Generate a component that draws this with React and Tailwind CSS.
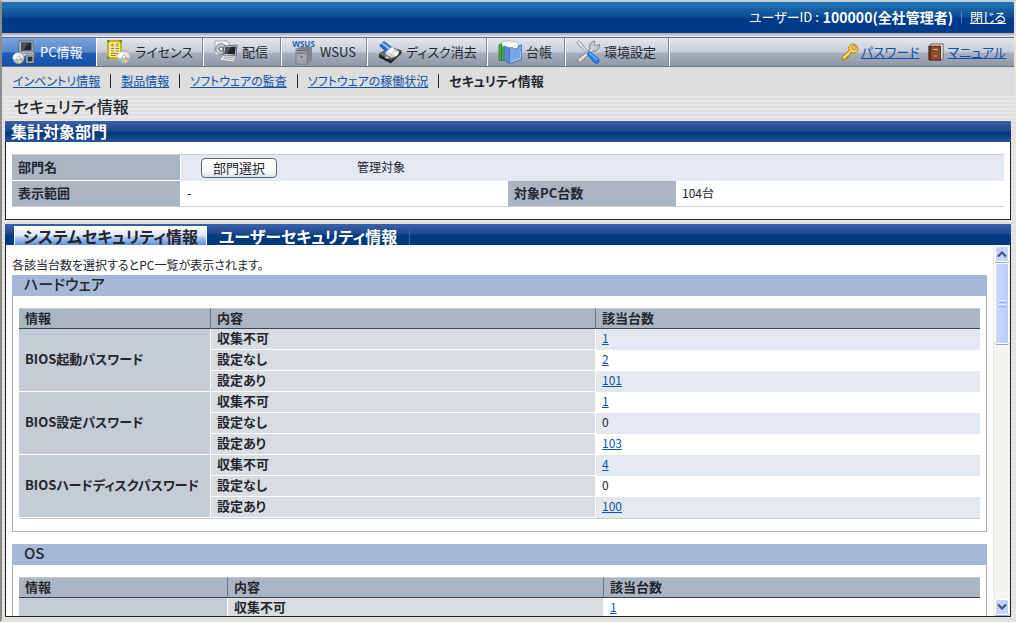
import React, { useRef, useState } from 'react';

const Disc = ({ cx, cy, r }) => (
  <g>
    <circle cx={cx} cy={cy} r={r} fill="#e4e6ea" stroke="#8f959e" strokeWidth="0.8" />
    <path d={`M${cx} ${cy} L${cx - r} ${cy + 1} A${r} ${r} 0 0 1 ${cx - 2} ${cy - r + 0.6} Z`} fill="#ffffff" />
    <path d={`M${cx} ${cy} L${cx + 1} ${cy + r - 0.5} A${r} ${r} 0 0 1 ${cx - 4} ${cy + r - 2} Z`} fill="#7fd6a8" />
    <path d={`M${cx} ${cy} L${cx + 4} ${cy + r - 2} A${r} ${r} 0 0 1 ${cx} ${cy + r - 0.5} Z`} fill="#f2d45c" />
    <path d={`M${cx} ${cy} L${cx + r - 0.6} ${cy + 1} A${r} ${r} 0 0 1 ${cx + 3} ${cy + r - 1.6} Z`} fill="#ee8fb4" />
    <path d={`M${cx} ${cy} L${cx - 4} ${cy + r - 2} L${cx - r + 0.6} ${cy + 2} Z`} fill="#8fb2f0" />
    <circle cx={cx} cy={cy} r="1.6" fill="#ffffff" stroke="#9aa0a8" strokeWidth="0.7" />
  </g>
);

const PcIcon = () => (
  <svg className="w-6 h-6 shrink-0" viewBox="0 0 24 24">
    <path d="M7 1 H21 V12 H7 Z" fill="#b9bec6" stroke="#5a616c" strokeWidth="0.8" />
    <path d="M9 2.5 H19.5 V10.5 H9 Z" fill="#23272e" />
    <path d="M9 2.5 H17 L11 10.5 H9 Z" fill="#4a515c" />
    <path d="M7 12 H21 L23 16 H6 Z" fill="#e3e5e9" stroke="#7b828d" strokeWidth="0.8" />
    <path d="M8.5 13.5 H20.5" stroke="#8c939e" strokeWidth="1" />
    <path d="M14 15 H22 V23 H14 Z" fill="#c3c7ce" stroke="#4d545f" strokeWidth="0.8" />
    <path d="M15.5 16.5 H20.5 V21.5 H15.5 Z" fill="#2b3038" />
    <Disc cx={6.5} cy={18} r={5.6} />
  </svg>
);

const LicenseIcon = () => (
  <svg className="w-6 h-6 shrink-0" viewBox="0 0 24 24">
    <path d="M1 1 H14 V18 H1 Z" fill="#f6ee9c" stroke="#d2b200" strokeWidth="2" />
    <path d="M0 0 H2.5 V2.5 H0 Z M12.5 0 H15 V2.5 H12.5 Z M0 16.5 H2.5 V19 H0 Z" fill="#4f9a2e" />
    <circle cx="5.5" cy="5" r="1.6" fill="#c99a1a" />
    <path d="M8.5 4 H12 M8.5 6 H12 M4 8.5 H7 M8.5 8.5 H12 M4 11 H7 M8.5 11 H12 M4 13.5 H11 M4 15.5 H9" stroke="#8d8749" strokeWidth="1" />
    <Disc cx={17} cy={17} r={6.2} />
  </svg>
);

const DeliverIcon = () => (
  <svg className="w-6 h-6 shrink-0" viewBox="0 0 24 24">
    <path d="M1 1 H13 L15 3 V15 H1 Z" fill="#f1f3f6" stroke="#9199a6" strokeWidth="0.8" />
    <circle cx="7" cy="9" r="5.4" fill="#c2c6cd" stroke="#7f8691" strokeWidth="1" />
    <path d="M7 9 L4 13 A5.4 5.4 0 0 1 2.2 10 Z" fill="#bfe0cc" />
    <circle cx="7" cy="9" r="2" fill="#ffffff" stroke="#5b626c" strokeWidth="1" />
    <path d="M10 6 L23 5 L22 16 L9 15 Z" fill="#d6d9de" stroke="#4b515b" strokeWidth="0.8" />
    <path d="M11.3 7.2 L21.8 6.4 L20.9 14.6 L10.4 13.8 Z" fill="#1f2329" />
    <path d="M11.3 7.2 L17 6.8 L13 14 L10.4 13.8 Z" fill="#4b525d" />
    <path d="M9 15.2 L22 16.2 L19.5 22 L5.5 20 Z" fill="#eceef1" stroke="#868d98" strokeWidth="0.8" />
    <path d="M10 16.8 L19.8 17.8 M9 18.4 L19 19.5" stroke="#9aa1ab" strokeWidth="0.9" />
  </svg>
);

const WsusIcon = () => (
  <svg className="w-6 h-6 shrink-0 overflow-visible" viewBox="0 0 24 24">
    <path d="M4 9 L8 7 H20 V21 L16 23 H4 Z" fill="#7f858d" />
    <path d="M4 9 H15 V24 H4 Z" fill="#a4a8af" stroke="#6f757e" strokeWidth="0.8" />
    <path d="M5 10.5 H14 M5 13 H14" stroke="#5c626b" strokeWidth="1.2" />
    <circle cx="9.5" cy="17" r="0.9" fill="#4d535c" />
    <path d="M5 21 H14" stroke="#8c929b" strokeWidth="1" />
    <text x="11.5" y="7" textAnchor="middle" fontSize="8" fontWeight="700" fontFamily="Open Sans, sans-serif" fill="#1f5fb4">WSUS</text>
  </svg>
);

const EraseIcon = () => (
  <svg className="w-6 h-6 shrink-0" viewBox="0 0 24 24">
    <path d="M1 14.5 L12 7 L23.5 11 L13 20.5 Z" fill="#6d7179" stroke="#25282d" strokeWidth="0.8" />
    <path d="M1 14.5 L13 20.5 V23.5 L1 17.5 Z" fill="#1d1f23" />
    <path d="M13 20.5 L23.5 11 V13.5 L13 23.5 Z" fill="#2b2e33" />
    <ellipse cx="14" cy="12.8" rx="6.6" ry="4.6" fill="#d4d6da" stroke="#8b9098" strokeWidth="0.7" />
    <path d="M14 12.8 L20 11 A6.6 4.6 0 0 1 18 16.2 Z" fill="#f6f7f8" />
    <path d="M6 17.6 L9 15.6 L12 17.2 L9.5 19.2 Z" fill="#c9cbd0" stroke="#3a3d43" strokeWidth="0.6" />
    <path d="M1 5.5 L6 1 L14 7 L8 12 Z" fill="#2f63cc" />
    <path d="M3.2 3.8 L4.8 2.2 L12.6 8.2 L10.8 9.7 Z" fill="#9dbdf6" />
    <path d="M8 12 L14 7 Q17 8.6 16 11 Q13.5 14 10.6 13.6 Z" fill="#ffffff" stroke="#b8bec9" strokeWidth="0.6" />
  </svg>
);

const LedgerIcon = () => (
  <svg className="w-6 h-6 shrink-0" viewBox="0 0 24 24">
    <path d="M1 5 L4 3.5 H8 V20 L4 20.5 H1 Z" fill="#4fae3c" stroke="#25701f" strokeWidth="0.8" />
    <path d="M3.5 5 V20" stroke="#2c7d25" strokeWidth="1" />
    <path d="M4 1.5 L12 0.8 L13.5 2 L19 1.2 L21 6 L9 9 L4 5.5 Z" fill="#fbfbfb" stroke="#a9adb4" strokeWidth="0.7" />
    <path d="M6 6 L11.5 8 V23.4 L6 20.5 Z" fill="#5c8ad6" stroke="#3a62a8" strokeWidth="0.7" />
    <path d="M11.5 8 L14.5 7.6 L16 9 L20 8 L20.6 5.6 L23.5 4.8 V19.6 L11.5 23.4 Z" fill="#7ba6e8" stroke="#4670b8" strokeWidth="0.8" />
    <path d="M14.8 7.2 L20.2 5.6 L19.4 7.6 L16.2 8.4 Z" fill="#ffffff" />
    <path d="M12.6 21.8 L22.5 18.6 V12" stroke="#a9c8f4" strokeWidth="1" fill="none" />
  </svg>
);

const ToolsIcon = () => (
  <svg className="w-6 h-6 shrink-0" viewBox="0 0 24 24">
    <path d="M2 21.5 Q0.8 19.8 2.4 18.6 L14 9.4 Q12.6 4.4 16.4 1.8 L18.6 1 V4.6 L20.4 6 L23.4 4.4 Q24 8.6 20.6 10.6 Q18.4 11.8 16.6 11.2 L5.2 22 Q3.4 23.4 2 21.5 Z" fill="#c6c8cc" stroke="#74787f" strokeWidth="0.9" />
    <path d="M3.2 20.4 L15.6 9.8" stroke="#eeeff1" strokeWidth="1.2" />
    <path d="M0.8 2.6 L2.8 0.8 L6.6 4.2 L7.2 6.2 L12.6 12 L11.4 13.2 L5.6 7.4 L3.8 6.6 Z" fill="#e9eaed" stroke="#777c85" strokeWidth="0.8" />
    <path d="M11 13.8 L13.6 11.4 L22.6 18.8 Q24 21.2 22 23 Q19.8 24 18 22.2 Z" fill="#2180ea" stroke="#1458ad" strokeWidth="0.8" />
    <path d="M13.8 13.4 L21.2 19.8" stroke="#7db8fa" strokeWidth="1.4" />
  </svg>
);

const KeyIcon = () => (
  <svg className="w-[18px] h-[18px] shrink-0" viewBox="0 0 18 18">
    <path d="M1 14 L9 6.5 L11.5 9 L8 12.2 V13.5 H6.5 V15 H5 L3.5 17 H1.2 Z" fill="#f3cb4a" stroke="#a87508" strokeWidth="1" />
    <circle cx="12.2" cy="5.6" r="4.5" fill="#f6cf4f" stroke="#b37d0b" strokeWidth="1" />
    <circle cx="13" cy="4.8" r="1.9" fill="#d9dde4" stroke="#a87508" strokeWidth="0.8" />
    <path d="M2.5 14.5 L9 8.5" stroke="#fff0ae" strokeWidth="1" />
  </svg>
);

const ManualIcon = () => (
  <svg className="w-[18px] h-[18px] shrink-0" viewBox="0 0 18 18">
    <path d="M2 3 L4 1 H16 V15 L14 17 H2 Z" fill="#f0efec" stroke="#5a2e1c" strokeWidth="0.8" />
    <path d="M2 3 H13.5 V17 H2 Z" fill="#8a4b33" stroke="#4c2213" strokeWidth="0.8" />
    <path d="M2.4 3.4 H4 V16.6 H2.4 Z" fill="#5e2d1b" />
    <path d="M6 6.5 H11 M7 13 H10" stroke="#e0b25e" strokeWidth="1" />
    <path d="M14 3 L15.6 1.8 V14.8 L14 16.4 Z" fill="#d8d4cf" />
  </svg>
);

const mainMenu = [
  { label: 'PC情報', icon: PcIcon, width: 'w-[95px]', active: true },
  { label: 'ライセンス', icon: LicenseIcon, width: 'w-[107px]' },
  { label: '配信', icon: DeliverIcon, width: 'w-[78px]' },
  { label: 'WSUS', icon: WsusIcon, width: 'w-[86px]' },
  { label: 'ディスク消去', icon: EraseIcon, width: 'w-[120px]' },
  { label: '台帳', icon: LedgerIcon, width: 'w-[78px]' },
  { label: '環境設定', icon: ToolsIcon, width: 'w-[104px]' },
];

const subMenu = ['インベントリ情報', '製品情報', 'ソフトウェアの監査', 'ソフトウェアの稼働状況'];

const hardware = [
  { name: 'BIOS起動パスワード', rows: [['収集不可', 1], ['設定なし', 2], ['設定あり', 101]] },
  { name: 'BIOS設定パスワード', rows: [['収集不可', 1], ['設定なし', 0], ['設定あり', 103]] },
  { name: 'BIOSハードディスクパスワード', rows: [['収集不可', 4], ['設定なし', 0], ['設定あり', 100]] },
];

const os = [{ name: '', rows: [['収集不可', 1]] }];

const Header = () => (
  <header className="flex h-[30px] shrink-0 items-center justify-end bg-[linear-gradient(#1b78b8,#114b90_15px,#003b8a_16px,#003b8a)] pr-2 text-[13px] text-white">
    <span className="mr-1">ユーザーID :</span>
    <span className="text-[14px] font-bold">100000(全社管理者)</span>
    <span className="mx-2 h-3 w-px bg-[#4d7fc0]" />
    <a href="#close" className="underline">閉じる</a>
  </header>
);

const MainMenu = () => (
  <nav className="flex h-[30px] shrink-0 items-stretch border-t border-b border-t-[#5f6b85] border-b-[#6d7382] bg-[linear-gradient(#e3e6ed,#c6ccd7_14px,#a9b1bf_15px,#8f96a6)]">
    {mainMenu.map(({ label, icon: Icon, width, active }) => (
      <a
        key={label}
        href="#menu"
        className={`${width} flex items-center gap-1 border-r border-white pl-2.5 text-[13px] whitespace-nowrap ${
          active
            ? 'bg-[linear-gradient(#7da2d8,#5587cd_14px,#1f5fb8_15px,#1450a4)] text-white'
            : 'text-[#23262e] shadow-[inset_-1px_0_0_#7f8798]'
        }`}
      >
        <Icon />
        {label}
      </a>
    ))}
    <div className="ml-auto flex items-center gap-2 pr-2 text-[13px] text-[#0f52a8]">
      <a href="#password" className="flex items-center gap-0.5">
        <KeyIcon />
        <span className="underline">パスワード</span>
      </a>
      <a href="#manual" className="flex items-center gap-0.5">
        <ManualIcon />
        <span className="underline">マニュアル</span>
      </a>
    </div>
  </nav>
);

const SubMenu = () => (
  <nav className="flex h-[27px] shrink-0 items-center bg-[#dcdddd] pl-[11px] text-[12px]">
    {subMenu.map((label) => (
      <React.Fragment key={label}>
        <a href="#sub" className="text-[#0f52a8] underline">{label}</a>
        <span className="mx-2.5 h-3.5 w-px bg-[#23262e]" />
      </React.Fragment>
    ))}
    <span className="text-[13px] font-bold">セキュリティ情報</span>
  </nav>
);

const Department = () => (
  <section className="shrink-0">
    <h2 className="flex h-[21px] items-center bg-[linear-gradient(#3a62a8,#1d468c_10px,#003a7c_11px,#003a7c_13px,#2d5499)] pb-0.5 pl-1.5 text-[16px] font-bold text-white">
      集計対象部門
    </h2>
    <div className="border border-t-0 border-[#1c2433] bg-white px-1.5 py-3">
      <table className="w-full table-fixed border-separate border-spacing-0 border-y border-[#cacdd2] text-left text-[13px] leading-4">
        <colgroup>
          <col className="w-[169px]" />
          <col className="w-[327px]" />
          <col className="w-[168px]" />
          <col />
        </colgroup>
        <tbody>
          <tr className="h-[26px]">
            <th scope="row" className="border-r border-b border-white bg-[#abb4c1] px-1.5 pt-0 pb-0.5">部門名</th>
            <td colSpan={3} className="bg-[#e4e8f0] p-0">
              <div className="flex items-center gap-20 pl-5">
                <button
                  type="button"
                  className="h-5 w-[76px] rounded-[4px] border border-[#5c6678] bg-[linear-gradient(#ffffff,#ffffff_10px,#dfe4ee)] text-[13px] leading-4"
                >
                  部門選択
                </button>
                <span className="pb-0.5 text-[12px]">管理対象</span>
              </div>
            </td>
          </tr>
          <tr className="h-[25px]">
            <th scope="row" className="border-r border-white bg-[#abb4c1] px-1.5 pt-0 pb-0.5">表示範囲</th>
            <td className="px-1.5 pt-0 pb-0.5">-</td>
            <th scope="row" className="bg-[#abb4c1] px-1.5 pt-0 pb-0.5">対象PC台数</th>
            <td className="px-1.5 pt-0 pb-0.5 text-[12px]">104台</td>
          </tr>
        </tbody>
      </table>
    </div>
  </section>
);

const CountTable = ({ title, groups, nameWidth, detailWidth }) => {
  let line = 0;
  return (
    <section className="mb-3">
      <h3 className="flex h-[21px] items-center bg-[#a5b9d7] pb-0.5 pl-3 text-[15px] font-medium">{title}</h3>
      <div className="border border-t-0 border-[#a9b0bd] px-1.5 py-3">
        <table className="w-full table-fixed border-separate border-spacing-0 border-b border-[#cacdd2] text-left text-[13px] leading-4">
          <thead>
            <tr className="h-[21px] bg-[#abb4c1]">
              <th scope="col" className={`${nameWidth} border-t border-r border-b border-t-[#c5c9cc] border-r-[#6c7484] border-b-[#3c4454] px-1.5 pt-0 pb-0.5`}>情報</th>
              <th scope="col" className={`${detailWidth} border-t border-r border-b border-t-[#c5c9cc] border-r-[#6c7484] border-b-[#3c4454] px-1.5 pt-0 pb-0.5`}>内容</th>
              <th scope="col" className="border-t border-b border-t-[#c5c9cc] border-b-[#3c4454] px-1.5 pt-0 pb-0.5">該当台数</th>
            </tr>
          </thead>
          <tbody>
            {groups.map((group) =>
              group.rows.map(([detail, count], i) => {
                line += 1;
                return (
                  <tr key={group.name + detail} className="h-[21px]">
                    {i === 0 && (
                      <th scope="rowgroup" rowSpan={group.rows.length} className="border-r border-b border-white bg-[#c5ccd5] px-1.5 pt-0 pb-0.5">
                        {group.name}
                      </th>
                    )}
                    <th scope="row" className="border-r border-b border-white bg-[#d9dde1] px-1.5 pt-0 pb-0.5">{detail}</th>
                    <td className={`px-1.5 pt-0 pb-1 text-[12px] ${line % 2 && groups.length > 1 ? 'bg-[#e4e8f0]' : ''}`}>
                      {count > 0 ? <a href="#list" className="text-[#0f52a8] underline">{count}</a> : count}
                    </td>
                  </tr>
                );
              })
            )}
          </tbody>
        </table>
      </div>
    </section>
  );
};

const ScrollBar = ({ onScroll }) => (
  <div className="flex w-[17px] shrink-0 flex-col border-l border-[#eceae2] bg-[#f6f5f0] px-px py-px">
    <button type="button" aria-label="上へ" onClick={() => onScroll(-60)} className="flex h-4 items-center justify-center rounded-[2px] border border-white bg-[#c3d4fb] shadow-[0_1px_0_#8fa9de]">
      <svg className="h-2 w-2.5" viewBox="0 0 10 8" fill="none" stroke="#41557f" strokeWidth="2.2"><path d="M1 6.5 L5 2.5 L9 6.5" /></svg>
    </button>
    <div className="mt-px flex h-[81px] flex-col items-center justify-center gap-px rounded-[2px] border border-white bg-[linear-gradient(90deg,#cbdafd,#b9cdfa)] shadow-[0_1px_0_#8fa9de]">
      <span className="h-px w-[7px] bg-[#eef4fe]" />
      <span className="h-px w-[7px] bg-[#8cb0f8]" />
      <span className="h-px w-[7px] bg-[#eef4fe]" />
      <span className="h-px w-[7px] bg-[#8cb0f8]" />
    </div>
    <button type="button" aria-label="下へ" onClick={() => onScroll(60)} className="mt-auto flex h-4 items-center justify-center rounded-[2px] border border-white bg-[#c3d4fb] shadow-[0_1px_0_#8fa9de]">
      <svg className="h-2 w-2.5" viewBox="0 0 10 8" fill="none" stroke="#41557f" strokeWidth="2.2"><path d="M1 1.5 L5 5.5 L9 1.5" /></svg>
    </button>
  </div>
);

const SecurityTabs = ({ tab, onChange }) => (
  <div role="tablist" className="flex h-[21px] shrink-0 items-end bg-[linear-gradient(#3a62a8,#1d468c_10px,#003a7c_11px,#003a7c)] pl-[9px]">
    {['システムセキュリティ情報', 'ユーザーセキュリティ情報'].map((label, i) => (
      <button
        key={label}
        type="button"
        role="tab"
        aria-selected={tab === i}
        onClick={() => onChange(i)}
        className={`flex h-[19px] items-center justify-center px-2 text-[16px] leading-4 font-bold whitespace-nowrap ${
          tab === i
            ? 'border border-b-0 border-white bg-[linear-gradient(#ffffff,#dbe6f8_9px,#b4cbf0_10px,#5a90de)]'
            : 'border-r border-[#3a62a8] px-3 text-white'
        }`}
      >
        {label}
      </button>
    ))}
  </div>
);

const App = () => {
  const [tab, setTab] = useState(0);
  const listRef = useRef(null);

  const handleScroll = (amount) => {
    listRef.current.scrollBy({ top: amount });
  };

  return (
    <div className="flex h-screen flex-col border-2 border-t-[#c3ccd4] border-r-[#e6e3da] border-b-[#e6e3da] border-l-[#8c8c88] bg-[repeating-linear-gradient(#dedfde_0px,#dedfde_2px,#e7e8e7_2px,#e7e8e7_4px)] font-['Noto_Sans_CJK_JP',sans-serif] text-[#23262e] [font-feature-settings:'palt']">
      <Header />
      <div className="h-[5px] shrink-0 border-t border-[#2e3a5c] bg-[linear-gradient(#9ba3b8,#eef0f5)]" />
      <MainMenu />
      <SubMenu />
      <h1 className="flex h-[27px] shrink-0 items-center pb-1 pl-3 text-[16px] font-medium">セキュリティ情報</h1>
      <main className="flex min-h-0 flex-1 flex-col gap-1 px-[3px] pb-[3px]">
        <Department />
        <section className="flex min-h-0 flex-1 flex-col">
          <SecurityTabs tab={tab} onChange={setTab} />
          <div className="flex min-h-0 flex-1 border border-t-0 border-[#1c2433] bg-white">
            <div ref={listRef} className="min-w-0 flex-1 overflow-y-auto px-1.5 pt-2.5 [scrollbar-width:none]">
              <p className="text-[12px] leading-5">各該当台数を選択するとPC一覧が表示されます。</p>
              <CountTable title="ハードウェア" groups={hardware} nameWidth="w-[192px]" detailWidth="w-[385px]" />
              <CountTable title="OS" groups={os} nameWidth="w-[209px]" detailWidth="w-[376px]" />
            </div>
            <ScrollBar onScroll={handleScroll} />
          </div>
        </section>
      </main>
    </div>
  );
};

export default App;
